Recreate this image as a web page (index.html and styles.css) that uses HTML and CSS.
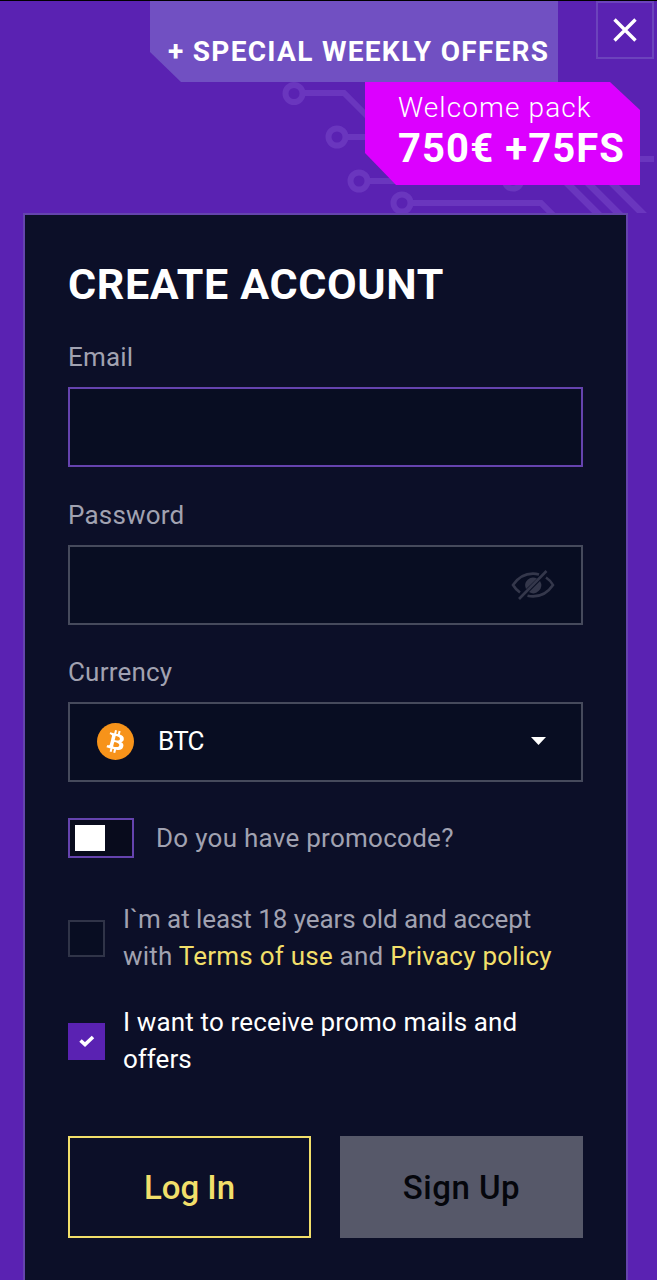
FILE: index.html
```html
<!DOCTYPE html>
<html lang="en">
<head>
<meta charset="utf-8">
<meta name="viewport" content="width=device-width">
<title>Create account</title>
<link rel="stylesheet" href="styles.css">
</head>
<body>
<header class="promo">
  <svg class="circuit" width="657" height="213" viewBox="0 0 657 213" fill="none" stroke="#6a36be" stroke-width="6" aria-hidden="true">
    <circle cx="294" cy="93.500" r="8.5"/><path d="M303 93h41l31 31"/>
    <circle cx="337" cy="137" r="8.5"/><path d="M346 137h30"/>
    <circle cx="359" cy="181" r="8.5"/><path d="M368 181h34"/>
    <circle cx="402" cy="203" r="8.5"/><path d="M411 203h130l13 13"/>
    <circle cx="513" cy="180" r="8.5"/><path d="M640 159h14"/>
    <path stroke-width="7" d="M566 182l34 34M587 182l34 34M611 182l34 34"/>
  </svg>
  <div class="promo-top">
    <div class="offers"><span class="offers-text">+ SPECIAL WEEKLY OFFERS</span></div>
    <button class="close" aria-label="Close">
      <svg width="24" height="24" viewBox="0 0 24 24" stroke="#fff" stroke-width="3.4"><path d="M1.5 1.5l21 21M22.5 1.5l-21 21"/></svg>
    </button>
  </div>
  <div class="welcome">
    <span class="welcome-name">Welcome pack</span>
    <strong class="welcome-value">750€ +75FS</strong>
  </div>
</header>
<main class="panel">
  <h1 class="title"><span>CREATE ACCOUNT</span></h1>
  <label class="label label-email">Email</label>
  <div class="field field-active"></div>
  <label class="label label-password">Password</label>
  <div class="field field-password">
    <svg width="44" height="30" viewBox="0 0 44 30" fill="none" stroke="#34374b" stroke-width="2.6">
      <path d="M9 22.5C5.500 20 3.500 17.500 2 15C7 7.500 14 3.600 22 3.600c2 0 4 .3 6 .9M35 7.500c3 2 5.500 4.700 7 7.500C37 22.500 30 26.400 22 26.400c-2 0-3.800-.3-5.500-.7"/>
      <path fill="#34374b" stroke="none" d="M15 19a8 8 0 0 1 11-10.500zM29 11a8 8 0 0 1-11 11z"/>
      <path d="M8 29L35.500 1"/>
    </svg>
  </div>
  <label class="label label-currency">Currency</label>
  <div class="field field-currency">
    <svg width="37" height="37" viewBox="0 0 32 32">
      <circle cx="16" cy="16" r="16" fill="#f7931a"/>
      <path fill="#fff" d="M23.189 14.020c.314-2.096-1.283-3.223-3.465-3.975l.708-2.840-1.728-.43-.69 2.765c-.454-.114-.92-.22-1.385-.326l.695-2.783L15.596 6l-.708 2.839c-.376-.086-.746-.17-1.104-.26l.002-.009-2.384-.595-.46 1.846s1.283.294 1.256.312c.7.175.826.638.805 1.006l-.806 3.235c.48.120.110.030.18.057l-.183-.045-1.130 4.532c-.86.212-.303.531-.793.410.18.025-1.256-.313-1.256-.313l-.858 1.978 2.250.561c.418.105.828.215 1.231.318l-.715 2.872 1.727.43.708-2.840c.472.127.930.245 1.378.357l-.706 2.828 1.728.43.715-2.866c2.948.558 5.164.333 6.097-2.333.752-2.146-.037-3.385-1.588-4.192 1.130-.260 1.980-1.003 2.207-2.538zm-3.950 5.538c-.533 2.147-4.148.986-5.320.695l.950-3.805c1.172.293 4.929.872 4.370 3.110zm.535-5.569c-.487 1.953-3.495.960-4.470.717l.860-3.450c.975.243 4.118.696 3.610 2.733z"/>
    </svg>
    <span class="currency-name">BTC</span>
    <svg class="caret" width="15" height="8" viewBox="0 0 15 8"><path fill="#fff" d="M0 0h15L7.500 8z"/></svg>
  </div>
  <div class="promo-row">
    <span class="toggle"><span class="knob"></span></span>
    <span class="promo-label">Do you have promocode?</span>
  </div>
  <div class="check-row">
    <span class="box"></span>
    <p class="check-text"><span class="line-age">I`m at least 18 years old and accept</span><br><span class="line-terms">with <a class="link">Terms of use</a> and <a class="link">Privacy policy</a></span></p>
  </div>
  <div class="check-row check-row-on">
    <span class="box box-on"><svg width="16" height="12" viewBox="0 0 16 12" fill="none" stroke="#fff" stroke-width="3.6"><path d="M1.500 5.500l4.500 4L14 2"/></svg></span>
    <p class="check-text"><span class="line-mails">I want to receive promo mails and</span><br><span>offers</span></p>
  </div>
  <div class="actions">
    <button class="btn btn-login"><span>Log In</span></button>
    <button class="btn btn-signup"><span>Sign Up</span></button>
  </div>
</main>
</body>
</html>
```
FILE: styles.css
```css
* { box-sizing: border-box; }
body {
  margin: 0;
  height: 1280px;
  overflow: hidden;
  background: #5a22b2;
  color: #fff;
  font-family: Roboto, "Liberation Sans", sans-serif;
  font-size: 26px;
}
button { font: inherit; padding: 0; border-radius: 0; background: none; }
.promo { position: relative; height: 213px; border-top: 1px solid #000; }
.circuit { position: absolute; left: 0; top: -1px; }
.promo-top { position: relative; display: flex; justify-content: space-between; align-items: flex-start; padding: 0 3px 0 150px; }
.offers {
  width: 408px;
  height: 81px;
  padding: 33px 0 0 18px;
  background: #7150c2;
  clip-path: polygon(0 0, 100% 0, 100% 100%, 31px 100%, 0 51px);
  font-size: 28px;
  line-height: 36px;
  font-weight: 700;
  letter-spacing: 1.3px;
  white-space: nowrap;
}
.close { display: flex; align-items: center; justify-content: center; width: 58px; height: 58px; border: 2px solid #6c43bc; }
.welcome {
  position: relative;
  display: flex;
  flex-direction: column;
  width: 275px;
  height: 103px;
  margin-left: 365px;
  padding: 9px 0 0 33px;
  background: #dc00ff;
  clip-path: polygon(0 0, 245px 0, 100% 28px, 100% 100%, 31px 100%, 0 71px);
  white-space: nowrap;
}
.welcome-name { font-size: 28px; line-height: 34px; font-weight: 300; letter-spacing: 1.1px; }
.welcome-value { font-size: 40px; line-height: 48px; letter-spacing: 1.1px; }
.panel {
  display: flex;
  flex-direction: column;
  width: 605px;
  height: 1080px;
  margin-left: 23px;
  padding: 44px 43px 0;
  border: 2px solid #6544ad;
  background: #0c0f28;
}
.title { margin: 0 0 33px; font-size: 43px; line-height: 50px; font-weight: 700; letter-spacing: 0.65px; white-space: nowrap; }
.label { align-self: flex-start; margin-bottom: 15px; line-height: 30px; letter-spacing: 0.2px; color: #a1a2b1; }
.field { display: flex; align-items: center; height: 80px; flex: none; border: 2px solid #464a5c; background: #080d22; }
.field-active { margin-bottom: 33px; border-color: #6543ae; }
.field-password { margin-bottom: 32px; padding-right: 26px; justify-content: flex-end; }
.field-currency { padding: 0 35px 2px 27px; }
.currency-name { margin-left: 24px; letter-spacing: -0.7px; }
.caret { margin-left: auto; }
.promo-row { display: flex; align-items: center; gap: 22px; height: 40px; margin-top: 36px; letter-spacing: 0.27px; color: #a1a2b1; white-space: nowrap; }
.toggle { width: 66px; height: 40px; padding: 5px; border: 2px solid #6543ae; background: #080b1c; }
.knob { display: block; width: 30px; height: 26px; background: #fff; }
.check-row { display: flex; align-items: center; gap: 18px; height: 74px; margin-top: 43px; color: #a1a2b1; }
.check-row-on { margin-top: 29px; color: #fff; }
.box { display: flex; align-items: center; justify-content: center; width: 37px; height: 37px; border: 2px solid #303448; background: #080d22; }
.box-on { border-color: #5a22b2; background: #5a22b2; }
.check-text { margin: 0; line-height: 37px; white-space: nowrap; }
.line-age { letter-spacing: -0.07px; }
.line-terms { letter-spacing: 0.23px; }
.line-mails { letter-spacing: 0.15px; }
.link { color: #f2df6a; }
.actions { display: grid; grid-template-columns: 1fr 1fr; gap: 29px; margin-top: 58px; }
.btn { height: 102px; border: 2px solid #f2df6a; color: #f2df6a; font-size: 33px; font-weight: 500; }
.btn-signup { border: 0; background: #565869; color: #05060c; letter-spacing: 0.5px; }
```
